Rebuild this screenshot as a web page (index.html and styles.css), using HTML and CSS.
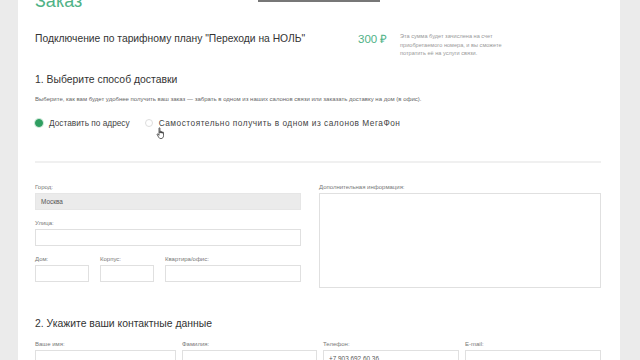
FILE: index.html
```html
<!DOCTYPE html>
<html lang="ru">
<head>
  <meta charset="UTF-8">
  <title>Заказ</title>
  <link rel="stylesheet" href="styles.css">
</head>
<body>
  <div class="topbar"></div>
  <div class="page">
    <h1 class="title">Заказ</h1>

    <div class="tariff">
      <div class="tariff-name">Подключение по тарифному плану "Переходи на НОЛЬ"</div>
      <div class="tariff-price">300 ₽</div>
      <div class="tariff-note">Эта сумма будет зачислена на счет приобретаемого номера, и вы сможете потратить её на услуги связи.</div>
    </div>

    <!-- 1. Доставка -->
    <h2 class="step">1. Выберите способ доставки</h2>
    <p class="hint">Выберите, как вам будет удобнее получить ваш заказ — забрать в одном из наших салонов связи или заказать доставку на дом (в офис).</p>
    <div class="radios">
      <div class="radio checked"><span class="dot"></span>Доставить по адресу</div>
      <div class="radio wide"><span class="dot"></span>Самостоятельно получить в одном из салонов МегаФон</div>
      <svg class="cursor" width="10" height="13" viewBox="0 0 10 13"><path d="M3 1.2c0-.6.9-.6.9 0V6h.3V4.6c0-.6.9-.6.9 0V6h.3V5c0-.6.9-.6.9 0v1.2h.3v-.7c0-.6.9-.6.9 0v3.3c0 1.7-1 2.8-2.6 2.8-1.1 0-1.8-.5-2.3-1.4L1.2 7.6c-.3-.6.4-1 .8-.5L3 8.3z" fill="#fff" stroke="#222" stroke-width=".7"/></svg>
    </div>

    <hr class="divider">

    <div class="address">
      <div class="address-left">
        <div class="field">
          <label>Город:</label>
          <div class="input filled">Москва</div>
        </div>
        <div class="field">
          <label>Улица:</label>
          <div class="input"></div>
        </div>
        <div class="field-row">
          <div class="field house">
            <label>Дом:</label>
            <div class="input"></div>
          </div>
          <div class="field house">
            <label>Корпус:</label>
            <div class="input"></div>
          </div>
          <div class="field flat">
            <label>Квартира/офис:</label>
            <div class="input"></div>
          </div>
        </div>
      </div>
      <div class="field address-right">
        <label>Дополнительная информация:</label>
        <div class="textarea"></div>
      </div>
    </div>

    <!-- 2. Контакты -->
    <h2 class="step step2">2. Укажите ваши контактные данные</h2>
    <div class="contacts">
      <div class="field"><label>Ваше имя:</label><div class="input"></div></div>
      <div class="field"><label>Фамилия:</label><div class="input"></div></div>
      <div class="field"><label>Телефон:</label><div class="input">+7 903 692 60 36</div></div>
      <div class="field"><label>E-mail:</label><div class="input"></div></div>
    </div>
  </div>
</body>
</html>
```

FILE: styles.css
```css
body { margin: 0; background: #ebebeb; font-family: "Liberation Sans", Arial, sans-serif; color: #333; overflow: hidden; height: 360px; }
.topbar { position: absolute; top: 0; left: 258px; width: 122px; height: 2px; background: #777; }
.page { margin-left: 18px; width: 566px; height: 360px; background: #fff; padding: 0 19px 0 17px; overflow: hidden; }
.title { margin: -8px 0 0; font-size: 18px; font-weight: 400; color: #4fb286; line-height: 18px; }
.tariff { display: flex; align-items: flex-start; margin-top: 21px; }
.tariff-name { width: 323px; font-size: 10.3px; line-height: 16px; }
.tariff-price { width: 42px; font-size: 11.5px; line-height: 16px; color: #4fb286; }
.tariff-note { width: 122px; font-size: 5.6px; line-height: 8.5px; color: #999; margin-top: 1px; }
.step { margin: 13px 0 0; font-size: 10.4px; font-weight: 400; line-height: 18px; color: #333; }
.hint { margin: 5px 0 0; font-size: 6px; line-height: 10px; color: #666; }
.radios { position: relative; display: flex; gap: 15px; margin-top: 12px; font-size: 8.3px; line-height: 14px; color: #444; }
.radio { display: flex; align-items: center; gap: 6px; }
.radio.wide { letter-spacing: 0.5px; }
.dot { width: 6px; height: 6px; border-radius: 50%; border: 1px solid #ddd; background: #fff; }
.radio.checked .dot { background: #2f9e61; border-color: #2f9e61; box-shadow: 0 0 0 1px #cbe8d7; }
.cursor { position: absolute; left: 121px; top: 11px; }
.divider { margin: 31px 0 0; border: 0; border-top: 2px solid #f0f0f0; }
.address { display: flex; gap: 18px; margin-top: 20px; }
.address-left { width: 266px; }
label { display: block; font-size: 6px; line-height: 8px; color: #777; }
.field label { margin-bottom: 2px; }
.field + .field { margin-top: 9px; }
.input { height: 15px; border: 1px solid #e0e0e0; background: #fff; font-size: 6.4px; line-height: 15px; padding-left: 5px; color: #555; }
.input.filled { background: #ebebeb; border-color: #e6e6e6; }
.field-row { display: flex; gap: 11px; margin-top: 9px; }
.field-row .field { margin-top: 0; }
.house { width: 54px; }
.flat { flex: 1; }
.address-right { flex: 1; }
.address .address-right { margin-top: 0; }
.textarea { height: 93px; border: 1px solid #e0e0e0; background: #fff; }
.step2 { margin-top: 27px; }
.contacts { display: grid; grid-template-columns: 141px 135px 136px 136px; gap: 6px; margin-top: 7px; }
.contacts .field { margin-top: 0; }
.contacts .input { height: 20px; }
```
